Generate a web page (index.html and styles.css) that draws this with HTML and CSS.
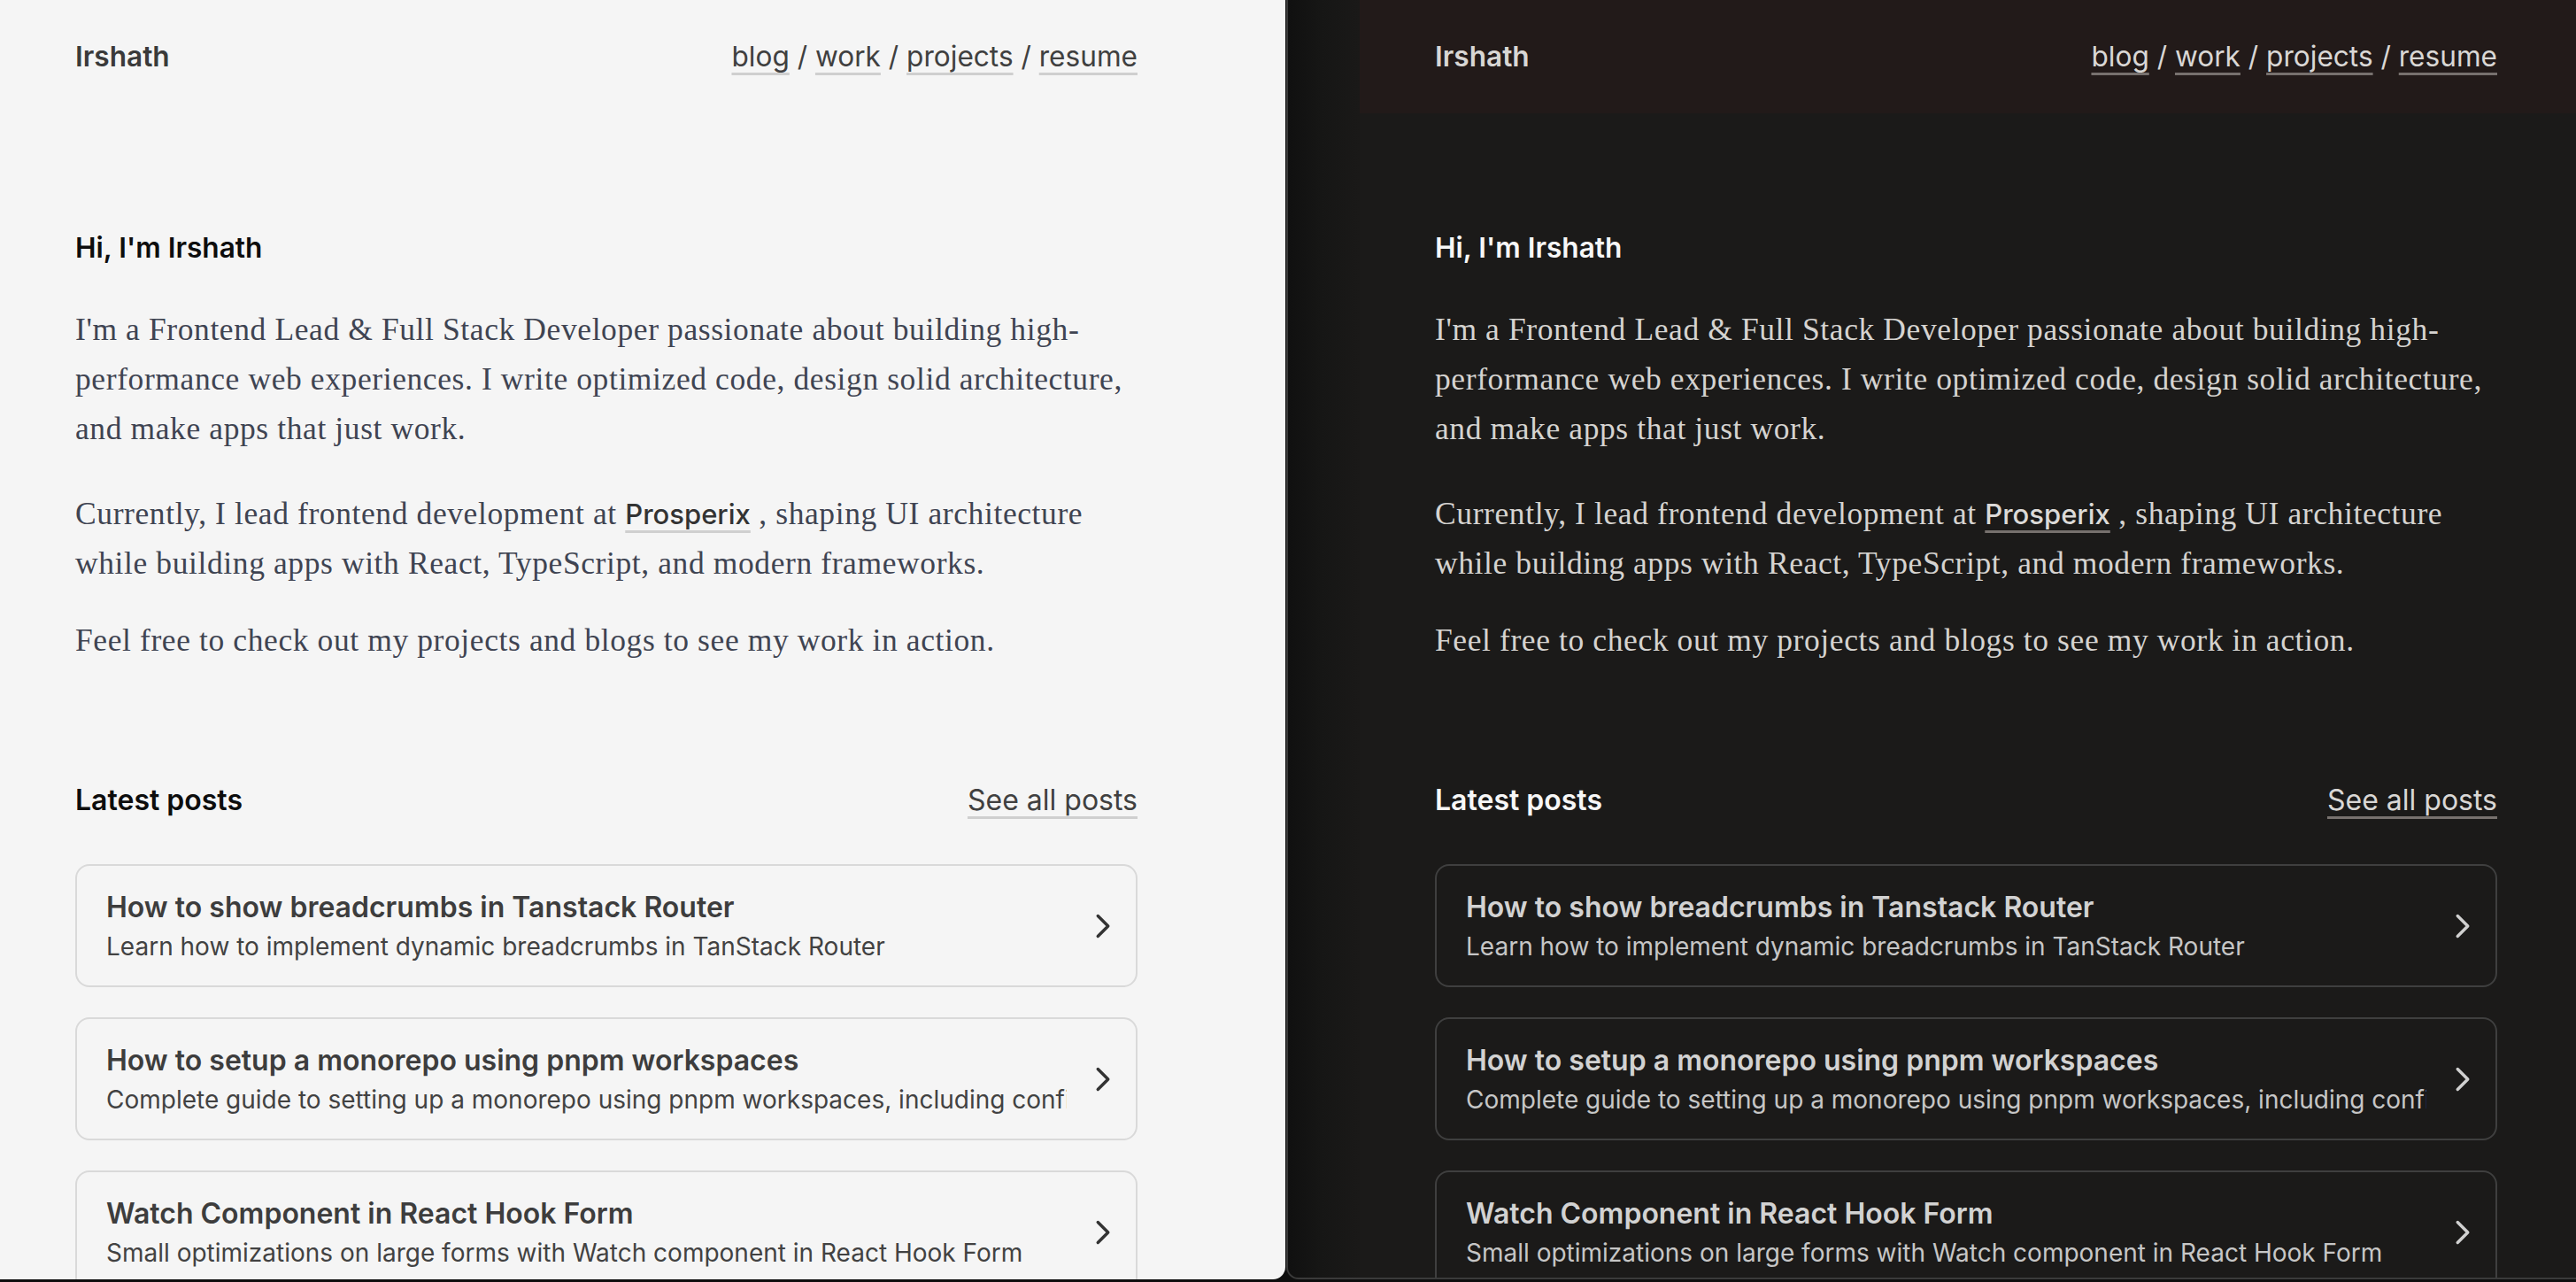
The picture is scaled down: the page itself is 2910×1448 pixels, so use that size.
FILE: index.html
```html
<!DOCTYPE html>
<html lang="en">
<head>
<meta charset="utf-8">
<title>Irshath</title>
<link rel="stylesheet" href="styles.css">
</head>
<body>
<div class="stage">
  <section class="panel light">
    <div class="site">
      <header class="topbar">
        <div class="bar">
          <a class="brand">Irshath</a>
          <nav class="nav"><a>blog</a> / <a>work</a> / <a>projects</a> / <a>resume</a></nav>
        </div>
      </header>
      <main class="content">
        <h1 class="hello">Hi, I'm Irshath</h1>
        <p class="lead p1">I'm a Frontend Lead &amp; Full Stack Developer passionate about building high-performance web experiences. I write optimized code, design solid architecture, and make apps that just work.</p>
        <p class="lead p2">Currently, I lead frontend development at <a class="inline">Prosperix</a> , shaping UI architecture while building apps with React, TypeScript, and modern frameworks.</p>
        <p class="lead p3">Feel free to check out my projects and blogs to see my work in action.</p>
        <div class="posts-head">
          <h2 class="posts-title">Latest posts</h2>
          <a class="see-all">See all posts</a>
        </div>
        <div class="cards">
          <a class="card">
            <div class="card-text">
              <div class="card-title">How to show breadcrumbs in Tanstack Router</div>
              <div class="card-desc">Learn how to implement dynamic breadcrumbs in TanStack Router</div>
            </div>
            <svg class="chev" viewBox="0 0 24 24"><polyline points="9 6 15 12 9 18"/></svg>
          </a>
          <a class="card">
            <div class="card-text">
              <div class="card-title">How to setup a monorepo using pnpm workspaces</div>
              <div class="card-desc">Complete guide to setting up a monorepo using pnpm workspaces, including configuration and best practices</div>
            </div>
            <svg class="chev" viewBox="0 0 24 24"><polyline points="9 6 15 12 9 18"/></svg>
          </a>
          <a class="card">
            <div class="card-text">
              <div class="card-title">Watch Component in React Hook Form</div>
              <div class="card-desc">Small optimizations on large forms with Watch component in React Hook Form</div>
            </div>
            <svg class="chev" viewBox="0 0 24 24"><polyline points="9 6 15 12 9 18"/></svg>
          </a>
        </div>
      </main>
    </div>
  </section>
  <section class="panel dark">
    <div class="gutter"></div>
    <div class="site">
      <header class="topbar">
        <div class="bar">
          <a class="brand">Irshath</a>
          <nav class="nav"><a>blog</a> / <a>work</a> / <a>projects</a> / <a>resume</a></nav>
        </div>
      </header>
      <main class="content">
        <h1 class="hello">Hi, I'm Irshath</h1>
        <p class="lead p1">I'm a Frontend Lead &amp; Full Stack Developer passionate about building high-performance web experiences. I write optimized code, design solid architecture, and make apps that just work.</p>
        <p class="lead p2">Currently, I lead frontend development at <a class="inline">Prosperix</a> , shaping UI architecture while building apps with React, TypeScript, and modern frameworks.</p>
        <p class="lead p3">Feel free to check out my projects and blogs to see my work in action.</p>
        <div class="posts-head">
          <h2 class="posts-title">Latest posts</h2>
          <a class="see-all">See all posts</a>
        </div>
        <div class="cards">
          <a class="card">
            <div class="card-text">
              <div class="card-title">How to show breadcrumbs in Tanstack Router</div>
              <div class="card-desc">Learn how to implement dynamic breadcrumbs in TanStack Router</div>
            </div>
            <svg class="chev" viewBox="0 0 24 24"><polyline points="9 6 15 12 9 18"/></svg>
          </a>
          <a class="card">
            <div class="card-text">
              <div class="card-title">How to setup a monorepo using pnpm workspaces</div>
              <div class="card-desc">Complete guide to setting up a monorepo using pnpm workspaces, including configuration and best practices</div>
            </div>
            <svg class="chev" viewBox="0 0 24 24"><polyline points="9 6 15 12 9 18"/></svg>
          </a>
          <a class="card">
            <div class="card-text">
              <div class="card-title">Watch Component in React Hook Form</div>
              <div class="card-desc">Small optimizations on large forms with Watch component in React Hook Form</div>
            </div>
            <svg class="chev" viewBox="0 0 24 24"><polyline points="9 6 15 12 9 18"/></svg>
          </a>
        </div>
      </main>
    </div>
  </section>
</div>
</body>
</html>
```

FILE: styles.css
```css
* { box-sizing: border-box; }
html, body { margin: 0; padding: 0; }
body {
  width: 2910px;
  height: 1448px;
  overflow: hidden;
  background: #0e0e0e;
  font-family: Inter, "Noto Sans", sans-serif;
}
a { color: inherit; text-decoration: none; }

.stage {
  display: flex;
  height: 1445px;
  gap: 1px;
}
.panel {
  height: 100%;
  overflow: hidden;
}
.light {
  width: 1452px;
  flex: none;
  background: #f5f5f5;
  border-bottom-right-radius: 14px;
  --heading: #0d0d0d;
  --brand: #3a3a3a;
  --nav: #404040;
  --uline: #cfcfcf;
  --body: #3f4452;
  --inline: #333333;
  --card-border: #d9d9d9;
  --card-title: #3d3d3d;
  --card-desc: #424242;
  --chev: #333333;
  --head-bg: #f5f5f5;
}
.dark {
  flex: 1;
  display: flex;
  background: #1b1a19;
  border-left: 2px solid #3a3a3a;
  border-bottom: 2px solid #3a3a3a;
  border-bottom-left-radius: 14px;
  --heading: #f7f7f7;
  --brand: #d8d6d4;
  --nav: #d9d7d5;
  --uline: #77716e;
  --body: #d5d3d0;
  --inline: #dcdad8;
  --card-border: #3f3f3f;
  --card-title: #d2d2d2;
  --card-desc: #c6c6c6;
  --chev: #d0d0d0;
  --head-bg: #221a19;
}
.gutter {
  width: 81px;
  flex: none;
  background: linear-gradient(to right, #101010 0%, #161615 45%, #1a1918 100%);
}
.site {
  flex: 1;
  min-width: 0;
}
.topbar {
  height: 128px;
  background: var(--head-bg);
  display: flex;
  align-items: center;
}
.bar {
  width: 1200px;
  margin-left: 85px;
  display: flex;
  justify-content: space-between;
  align-items: center;
  font-size: 31.6px;
  line-height: 40px;
}
.brand {
  font-weight: 600;
  color: var(--brand);
}
.nav {
  color: var(--nav);
  font-weight: 400;
}
.nav a, .see-all, .inline {
  text-decoration: underline;
  text-decoration-color: var(--uline);
  text-decoration-thickness: 3px;
  text-underline-offset: 7px;
}
.content {
  width: 1200px;
  margin-left: 85px;
  padding-top: 132px;
}
.hello {
  margin: 0;
  font-size: 31.6px;
  line-height: 40px;
  font-weight: 600;
  color: var(--heading);
}
.lead {
  margin: 0;
  font-family: "Liberation Serif", "Times New Roman", serif;
  font-size: 35.5px;
  letter-spacing: 0.6px;
  line-height: 56px;
  color: var(--body);
}
.p1 { margin-top: 44px; }
.p2 { margin-top: 40px; }
.p3 { margin-top: 31px; }
.inline {
  font-family: Inter, "Noto Sans", sans-serif;
  font-weight: 500;
  font-size: 31px;
  letter-spacing: 0;
  line-height: 1;
  color: var(--inline);
}
.posts-head {
  margin-top: 133px;
  display: flex;
  justify-content: space-between;
  align-items: center;
}
.posts-title {
  margin: 0;
  font-size: 32px;
  line-height: 40px;
  font-weight: 600;
  color: var(--heading);
}
.see-all {
  font-size: 32px;
  line-height: 40px;
  color: var(--nav);
}
.cards {
  margin-top: 52px;
  display: flex;
  flex-direction: column;
  gap: 34px;
}
.card {
  height: 139px;
  display: flex;
  align-items: center;
  gap: 18px;
  padding: 0 14px 0 33px;
  border: 2px solid var(--card-border);
  border-radius: 16px;
}
.card-text {
  flex: 1;
  min-width: 0;
  display: flex;
  flex-direction: column;
  gap: 4px;
}
.card-title {
  font-size: 32px;
  line-height: 42px;
  font-weight: 600;
  color: var(--card-title);
  white-space: nowrap;
  overflow: hidden;
}
.card-desc {
  font-size: 28px;
  line-height: 38px;
  color: var(--card-desc);
  white-space: nowrap;
  overflow: hidden;
}
.chev {
  width: 46px;
  height: 46px;
  flex: none;
  fill: none;
  stroke: var(--chev);
  stroke-width: 1.8;
  stroke-linecap: round;
  stroke-linejoin: round;
}
```
